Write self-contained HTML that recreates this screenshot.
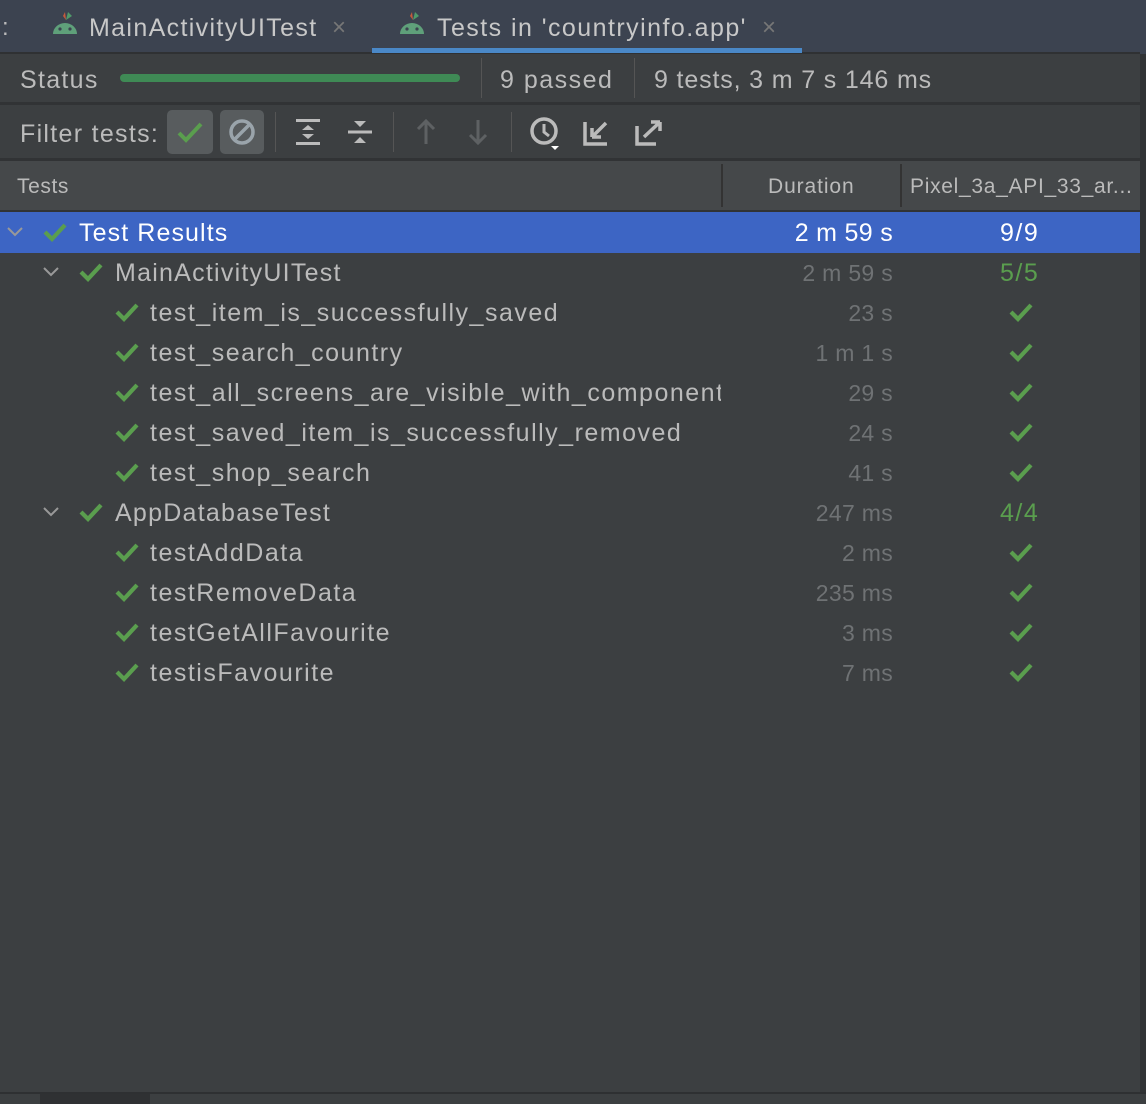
<!DOCTYPE html>
<html><head><style>
*{margin:0;padding:0;box-sizing:border-box}
body{width:1146px;height:1104px;background:#3c3f41;font-family:"Liberation Sans",sans-serif;color:#bbbbbb;position:relative;overflow:hidden}
.abs{position:absolute}
.t{position:absolute;white-space:nowrap;letter-spacing:1.5px}
.d{letter-spacing:0.3px}
</style></head><body>
<!-- tab bar -->
<div class="abs" style="left:0;top:0;width:1146px;height:52px;background:#3c4350"></div>
<div class="abs" style="left:0;top:52px;width:1146px;height:2px;background:#2f3133"></div>
<div class="t" style="left:2px;top:14px;font-size:24px;color:#bbb">:</div>
<svg class="abs" style="left:50px;top:10px" width="30" height="26" viewBox="0 0 30 26"><path d="M3 24 A12 11 0 0 1 27 24 Z" fill="#5fa07a"/><circle cx="10" cy="19" r="1.6" fill="#3c4350"/><circle cx="20" cy="19" r="1.6" fill="#3c4350"/><path d="M16 10 L18 2 L22 6 Z" fill="#4f9a6a"/><path d="M16 10 L15 2 L13 6 Z" fill="#c65a3c"/></svg>
<div class="t" style="left:89px;top:14px;font-size:25px;color:#c8c8c8;letter-spacing:1.35px">MainActivityUITest</div>
<div class="t" style="left:332px;top:14px;font-size:24px;color:#777">×</div>
<svg class="abs" style="left:397px;top:10px" width="30" height="26" viewBox="0 0 30 26"><path d="M3 24 A12 11 0 0 1 27 24 Z" fill="#5fa07a"/><circle cx="10" cy="19" r="1.6" fill="#3c4350"/><circle cx="20" cy="19" r="1.6" fill="#3c4350"/><path d="M16 10 L18 2 L22 6 Z" fill="#4f9a6a"/><path d="M16 10 L15 2 L13 6 Z" fill="#c65a3c"/></svg>
<div class="t" style="left:437px;top:14px;font-size:25px;color:#c8c8c8;letter-spacing:1.45px">Tests in 'countryinfo.app'</div>
<div class="t" style="left:762px;top:14px;font-size:24px;color:#777">×</div>
<div class="abs" style="left:372px;top:48px;width:430px;height:5px;background:#4a88c7"></div>
<!-- status row -->
<div class="t" style="left:20px;top:66px;font-size:25px;letter-spacing:1.3px">Status</div>
<div class="abs" style="left:120px;top:74px;width:340px;height:8px;border-radius:4px;background:#3f8a55"></div>
<div class="abs" style="left:481px;top:58px;width:1px;height:40px;background:#555"></div>
<div class="t" style="left:500px;top:66px;font-size:25px;letter-spacing:1.5px">9 passed</div>
<div class="abs" style="left:634px;top:58px;width:1px;height:40px;background:#555"></div>
<div class="t" style="left:654px;top:66px;font-size:25px;letter-spacing:0.85px">9 tests, 3 m 7 s 146 ms</div>
<div class="abs" style="left:0;top:102px;width:1146px;height:3px;background:#313335"></div>
<!-- filter row -->
<div class="t" style="left:20px;top:120px;font-size:25px;letter-spacing:1.3px">Filter tests:</div>
<div class="abs" style="left:167px;top:110px;width:46px;height:44px;border-radius:5px;background:#585c5e"></div>
<svg class="abs" style="left:175px;top:118px" width="30" height="28"><path d="M4 15 L11 22 L26 6" stroke="#5a9e4e" stroke-width="4" fill="none"/></svg>
<div class="abs" style="left:220px;top:110px;width:44px;height:44px;border-radius:5px;background:#585c5e"></div>
<svg class="abs" style="left:226px;top:116px" width="32" height="32"><circle cx="16" cy="16" r="11" stroke="#9aa4ab" stroke-width="3.5" fill="none"/><path d="M9 23 L23 9" stroke="#9aa4ab" stroke-width="3.5"/></svg>
<div class="abs" style="left:275px;top:112px;width:1px;height:40px;background:#555"></div>
<svg class="abs" style="left:292px;top:116px" width="32" height="32"><rect x="4" y="3" width="24" height="3" fill="#bbb"/><rect x="4" y="26" width="24" height="3" fill="#bbb"/><path d="M10 14 L16 9 L22 14Z M10 18 L16 23 L22 18Z" fill="#bbb"/></svg>
<svg class="abs" style="left:344px;top:116px" width="32" height="32"><rect x="4" y="14.5" width="24" height="3" fill="#bbb"/><path d="M10 5 L22 5 L16 11Z M10 27 L22 27 L16 21Z" fill="#bbb"/></svg>
<div class="abs" style="left:393px;top:112px;width:1px;height:40px;background:#555"></div>
<svg class="abs" style="left:412px;top:116px" width="28" height="32"><path d="M14 28 V6 M6 13 L14 5 L22 13" stroke="#5e6163" stroke-width="3" fill="none"/></svg>
<svg class="abs" style="left:464px;top:116px" width="28" height="32"><path d="M14 4 V26 M6 19 L14 27 L22 19" stroke="#5e6163" stroke-width="3" fill="none"/></svg>
<div class="abs" style="left:511px;top:112px;width:1px;height:40px;background:#555"></div>
<svg class="abs" style="left:527px;top:114px" width="36" height="36"><circle cx="17" cy="17" r="12" stroke="#bbb" stroke-width="3.5" fill="none"/><path d="M17 10 V18 L22 22" stroke="#bbb" stroke-width="3" fill="none"/><path d="M24 32 L32 32 L28 36Z" fill="#fff"/></svg>
<svg class="abs" style="left:582px;top:118px" width="30" height="30"><path d="M3 4 V26 H25 M10 19 L24 5 M10 19 V10 M10 19 H19" stroke="#bbb" stroke-width="3.5" fill="none"/></svg>
<svg class="abs" style="left:634px;top:118px" width="30" height="30"><path d="M3 8 V26 H22 M10 19 L26 4 M26 4 H17 M26 4 V13" stroke="#bbb" stroke-width="3.5" fill="none"/></svg>
<div class="abs" style="left:0;top:158px;width:1146px;height:3px;background:#313335"></div>
<!-- header -->
<div class="abs" style="left:0;top:161px;width:1140px;height:49px;background:#45484a"></div>
<div class="t" style="left:17px;top:175px;font-size:21px;color:#bbb;letter-spacing:0.6px">Tests</div>
<div class="abs" style="left:721px;top:164px;width:2px;height:43px;background:#333"></div>
<div class="t" style="left:768px;top:175px;font-size:21px;color:#bbb;letter-spacing:0.9px">Duration</div>
<div class="abs" style="left:900px;top:164px;width:2px;height:43px;background:#333"></div>
<div class="t" style="left:910px;top:175px;font-size:21px;color:#bbb;letter-spacing:0.7px">Pixel_3a_API_33_ar...</div>
<div class="abs" style="left:0;top:210px;width:1140px;height:2px;background:#313335"></div>
<div class="abs" style="left:1140px;top:0;width:6px;height:1104px;background:#313335"></div>
<div class="abs" style="left:1140px;top:0;width:6px;height:54px;background:#3c4350"></div>
<!-- selection -->
<div class="abs" style="left:0;top:212px;width:1140px;height:41px;background:#3d65c4"></div>
<!-- bottom -->
<div class="abs" style="left:0;top:1092px;width:1146px;height:2px;background:#2e3032"></div>
<div class="abs" style="left:0;top:1094px;width:1146px;height:10px;background:#3c3f41"></div>
<div class="abs" style="left:40px;top:1094px;width:110px;height:10px;background:#2f3133"></div>
<svg class="abs" style="left:0;top:0" width="1146" height="1104">
<defs><path id="ck" d="M0 9 L7 16 L20 2" stroke="#5a9e4e" stroke-width="4.2" fill="none"/><path id="ch" d="M0 0 L7 7 L14 0" stroke="#999" stroke-width="2" fill="none"/></defs>
<use href="#ch" x="8" y="228"/>
<use href="#ck" x="45" y="223"/>
<use href="#ch" x="44" y="268"/>
<use href="#ck" x="81" y="263"/>
<use href="#ck" x="117" y="303"/><use href="#ck" x="1011" y="303"/>
<use href="#ck" x="117" y="343"/><use href="#ck" x="1011" y="343"/>
<use href="#ck" x="117" y="383"/><use href="#ck" x="1011" y="383"/>
<use href="#ck" x="117" y="423"/><use href="#ck" x="1011" y="423"/>
<use href="#ck" x="117" y="463"/><use href="#ck" x="1011" y="463"/>
<use href="#ch" x="44" y="508"/>
<use href="#ck" x="81" y="503"/>
<use href="#ck" x="117" y="543"/><use href="#ck" x="1011" y="543"/>
<use href="#ck" x="117" y="583"/><use href="#ck" x="1011" y="583"/>
<use href="#ck" x="117" y="623"/><use href="#ck" x="1011" y="623"/>
<use href="#ck" x="117" y="663"/><use href="#ck" x="1011" y="663"/>
</svg>
<div class="t" style="left:79px;top:219px;font-size:25px;color:#fff;letter-spacing:1.1px">Test Results</div>
<div class="t d" style="right:253px;top:219px;font-size:25px;color:#fff">2 m 59 s</div>
<div class="t" style="left:1000px;top:219px;font-size:25px;color:#fff">9/9</div>
<div class="t" style="left:115px;top:259px;font-size:25px;letter-spacing:1.25px">MainActivityUITest</div>
<div class="t d" style="right:253px;top:260px;font-size:23px;color:#6f7274">2 m 59 s</div>
<div class="t" style="left:1000px;top:259px;font-size:25px;color:#5a9e4e">5/5</div>
<div class="t" style="left:150px;top:299px;font-size:25px">test_item_is_successfully_saved</div>
<div class="t d" style="right:253px;top:300px;font-size:23px;color:#6f7274">23 s</div>
<div class="t" style="left:150px;top:339px;font-size:25px">test_search_country</div>
<div class="t d" style="right:253px;top:340px;font-size:23px;color:#6f7274">1 m 1 s</div>
<div class="t" style="left:150px;top:379px;font-size:25px;width:571px;overflow:hidden">test_all_screens_are_visible_with_components</div>
<div class="t d" style="right:253px;top:380px;font-size:23px;color:#6f7274">29 s</div>
<div class="t" style="left:150px;top:419px;font-size:25px">test_saved_item_is_successfully_removed</div>
<div class="t d" style="right:253px;top:420px;font-size:23px;color:#6f7274">24 s</div>
<div class="t" style="left:150px;top:459px;font-size:25px">test_shop_search</div>
<div class="t d" style="right:253px;top:460px;font-size:23px;color:#6f7274">41 s</div>
<div class="t" style="left:115px;top:499px;font-size:25px;letter-spacing:1.25px">AppDatabaseTest</div>
<div class="t d" style="right:253px;top:500px;font-size:23px;color:#6f7274">247 ms</div>
<div class="t" style="left:1000px;top:499px;font-size:25px;color:#5a9e4e">4/4</div>
<div class="t" style="left:150px;top:539px;font-size:25px">testAddData</div>
<div class="t d" style="right:253px;top:540px;font-size:23px;color:#6f7274">2 ms</div>
<div class="t" style="left:150px;top:579px;font-size:25px">testRemoveData</div>
<div class="t d" style="right:253px;top:580px;font-size:23px;color:#6f7274">235 ms</div>
<div class="t" style="left:150px;top:619px;font-size:25px">testGetAllFavourite</div>
<div class="t d" style="right:253px;top:620px;font-size:23px;color:#6f7274">3 ms</div>
<div class="t" style="left:150px;top:659px;font-size:25px">testisFavourite</div>
<div class="t d" style="right:253px;top:660px;font-size:23px;color:#6f7274">7 ms</div>
</body></html>
